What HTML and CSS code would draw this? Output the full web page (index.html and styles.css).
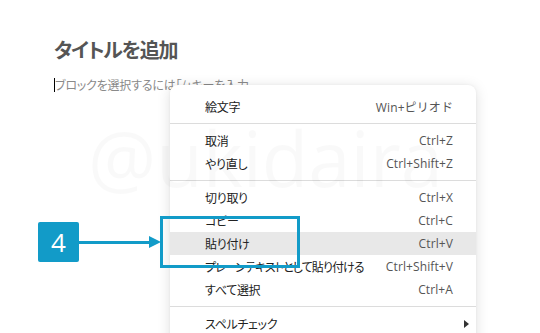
FILE: index.html
```html
<!DOCTYPE html>
<html lang="ja">
<head>
<meta charset="utf-8">
<link rel="stylesheet" href="styles.css">
</head>
<body>
  <div class="editor">
    <h1 class="title">タイトルを追加</h1>
    <p class="placeholder"><span class="caret"></span>ブロックを選択するには「/」キーを入力</p>
  </div>

  <ul class="menu">
    <li class="item"><span class="label">絵文字</span><span class="key">Win+ピリオド</span></li>
    <li class="sep"></li>
    <li class="item"><span class="label">取消</span><span class="key">Ctrl+Z</span></li>
    <li class="item"><span class="label">やり直し</span><span class="key">Ctrl+Shift+Z</span></li>
    <li class="sep"></li>
    <li class="item"><span class="label">切り取り</span><span class="key">Ctrl+X</span></li>
    <li class="item"><span class="label">コピー</span><span class="key">Ctrl+C</span></li>
    <li class="item active"><span class="label">貼り付け</span><span class="key">Ctrl+V</span></li>
    <li class="item"><span class="label long">プレーンテキストとして貼り付ける</span><span class="key">Ctrl+Shift+V</span></li>
    <li class="item"><span class="label">すべて選択</span><span class="key">Ctrl+A</span></li>
    <li class="sep"></li>
    <li class="item"><span class="label">スペルチェック</span><span class="submenu"></span></li>
  </ul>

  <div class="watermark">@ukidaira</div>

  <div class="callout">
    <div class="badge">4</div>
    <div class="arrow-line"></div>
    <div class="arrow-head"></div>
  </div>
  <div class="focus-box"></div>
</body>
</html>
```

FILE: styles.css
```css
html, body {
  margin: 0;
  padding: 0;
  background: #ffffff;
}
body {
  width: 540px;
  height: 333px;
  overflow: hidden;
  position: relative;
  font-family: "Noto Sans CJK JP", "Noto Sans", sans-serif;
}
.editor {
  padding: 36px 0 0 54px;
}
.title {
  margin: 0;
  font-size: 20px;
  line-height: 28px;
  font-weight: 700;
  color: #555555;
  font-feature-settings: "palt";
  letter-spacing: -1.2px;
}
.placeholder {
  margin: 14px 0 0 0;
  font-size: 12px;
  line-height: 14px;
  color: #8a8a8a;
  display: flex;
  align-items: center;
  font-feature-settings: "palt";
  letter-spacing: -0.2px;
}
.caret {
  display: inline-block;
  width: 1px;
  height: 14px;
  background: #000;
}
.menu {
  position: absolute;
  left: 170px;
  top: 85px;
  width: 306px;
  margin: 0;
  padding: 10px 0 0 0;
  list-style: none;
  background: #ffffff;
  border-radius: 8px;
  box-shadow: 0 2px 14px rgba(0, 0, 0, 0.13), 0 0 3px rgba(0, 0, 0, 0.05);
  height: 260px;
}
.item {
  height: 23px;
  display: flex;
  align-items: center;
  justify-content: space-between;
  padding: 0 23px 0 35px;
  font-size: 12px;
}
.item.active {
  background: #e8e8e8;
}
.label {
  color: #222222;
  font-feature-settings: "palt";
  letter-spacing: -0.3px;
}
.label.long {
  letter-spacing: -0.9px;
}
.key {
  color: #555555;
  font-family: "Open Sans", "Noto Sans CJK JP", sans-serif;
  font-size: 12px;
  letter-spacing: 0.1px;
}
.submenu {
  width: 0;
  height: 0;
  border-top: 4px solid transparent;
  border-bottom: 4px solid transparent;
  border-left: 5px solid #333;
  margin-right: -16px;
}
.sep {
  height: 1px;
  background: #dcdcdc;
  margin: 5px 0;
}
.watermark {
  position: absolute;
  left: 88px;
  top: 108px;
  font-family: "Open Sans", sans-serif;
  font-weight: 400;
  font-size: 76px;
  line-height: 100px;
  color: rgba(0, 0, 0, 0.022);
  pointer-events: none;
}
.callout {
  position: absolute;
  left: 38px;
  top: 222px;
  display: flex;
  align-items: center;
}
.badge {
  width: 41px;
  height: 40px;
  border-radius: 2px;
  background: #129bc8;
  color: #ffffff;
  font-family: "Open Sans", sans-serif;
  font-size: 26px;
  line-height: 40px;
  text-align: center;
}
.arrow-line {
  width: 70px;
  height: 3px;
  background: #129bc8;
}
.arrow-head {
  width: 0;
  height: 0;
  border-top: 6px solid transparent;
  border-bottom: 6px solid transparent;
  border-left: 12px solid #129bc8;
}
.focus-box {
  position: absolute;
  left: 160px;
  top: 216px;
  width: 134px;
  height: 46px;
  border: 3px solid #129bc8;
}
```
